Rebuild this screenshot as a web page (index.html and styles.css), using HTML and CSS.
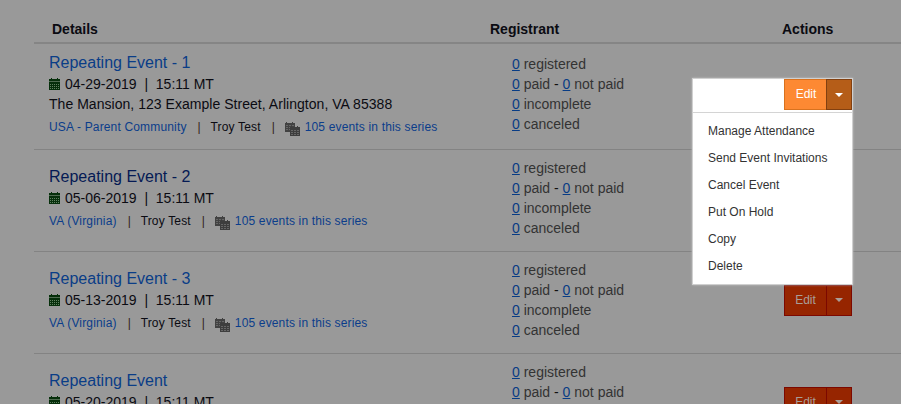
FILE: index.html
```
<!DOCTYPE html>
<html lang="en">
<head>
<meta charset="utf-8">
<title>Events</title>
<link rel="stylesheet" href="styles.css">
</head>
<body>
<svg class="defs" width="0" height="0" aria-hidden="true">
  <symbol id="cal" viewBox="0 0 11 12">
    <path d="M0 1h2V0h1v1h5V0h1v1h2v11H0z" fill="#062f0b"/>
    <path d="M0 3.5h11" stroke="#4f6b50"/>
    <path d="M1 6.5h9M1 8.5h9M1 10.5h9" stroke="#60805f" stroke-dasharray="1 1" fill="none"/>
  </symbol>
  <symbol id="series" viewBox="0 0 15 14">
    <path d="M0 1h1V0h1v1h5V0h1v1h2v9H0z" fill="#424242"/>
    <path d="M1 3.5h8M1 5.5h8M1 7.5h8" stroke="#666" stroke-dasharray="2 1"/>
    <path d="M5 5h1V4h1v1h5V4h1v1h2v9H5z" fill="#3d3d3d"/>
    <path d="M6 8.5h8M6 10.5h8M6 12.5h8" stroke="#666" stroke-dasharray="2 1"/>
  </symbol>
</svg>
<main class="table">
  <header class="head"><div>Details</div><div>Registrant</div><div>Actions</div></header>

  <section class="row first">
    <div class="details">
      <a class="title">Repeating Event - 1</a>
      <div class="date"><svg class="cal"><use href="#cal"/></svg>04-29-2019&nbsp; |&nbsp; 15:11 MT</div>
      <div class="address">The Mansion, 123 Example Street, Arlington, VA 85388</div>
      <div class="meta"><a>USA - Parent Community</a><i>|</i><span class="owner">Troy Test</span><i>|</i><svg class="series"><use href="#series"/></svg><a class="events">105 events in this series</a></div>
    </div>
    <div class="reg">
      <div><a>0</a> registered</div><div><a>0</a> paid <b>-</b> <a>0</a> not paid</div><div><a>0</a> incomplete</div><div><a>0</a> canceled</div>
    </div>
    <div class="actions">
      <div class="popup">
        <div class="bar"><div class="split active"><span class="edit">Edit</span><span class="toggle"></span></div></div>
        <ul class="menu"><li>Manage Attendance</li><li>Send Event Invitations</li><li>Cancel Event</li><li>Put On Hold</li><li>Copy</li><li>Delete</li></ul>
      </div>
    </div>
  </section>

  <section class="row">
    <div class="details">
      <a class="title visited">Repeating Event - 2</a>
      <div class="date"><svg class="cal"><use href="#cal"/></svg>05-06-2019&nbsp; |&nbsp; 15:11 MT</div>
      <div class="meta"><a>VA (Virginia)</a><i>|</i><span class="owner">Troy Test</span><i>|</i><svg class="series"><use href="#series"/></svg><a class="events">105 events in this series</a></div>
    </div>
    <div class="reg">
      <div><a>0</a> registered</div><div><a>0</a> paid <b>-</b> <a>0</a> not paid</div><div><a>0</a> incomplete</div><div><a>0</a> canceled</div>
    </div>
    <div class="actions"></div>
  </section>

  <section class="row">
    <div class="details">
      <a class="title">Repeating Event - 3</a>
      <div class="date"><svg class="cal"><use href="#cal"/></svg>05-13-2019&nbsp; |&nbsp; 15:11 MT</div>
      <div class="meta"><a>VA (Virginia)</a><i>|</i><span class="owner">Troy Test</span><i>|</i><svg class="series"><use href="#series"/></svg><a class="events">105 events in this series</a></div>
    </div>
    <div class="reg">
      <div><a>0</a> registered</div><div><a>0</a> paid <b>-</b> <a>0</a> not paid</div><div><a>0</a> incomplete</div><div><a>0</a> canceled</div>
    </div>
    <div class="actions"><div class="split"><span class="edit">Edit</span><span class="toggle"></span></div></div>
  </section>

  <section class="row">
    <div class="details">
      <a class="title">Repeating Event</a>
      <div class="date"><svg class="cal"><use href="#cal"/></svg>05-20-2019&nbsp; |&nbsp; 15:11 MT</div>
      <div class="meta"></div>
    </div>
    <div class="reg">
      <div><a>0</a> registered</div><div><a>0</a> paid <b>-</b> <a>0</a> not paid</div><div></div><div></div>
    </div>
    <div class="actions"><div class="split"><span class="edit">Edit</span><span class="toggle"></span></div></div>
  </section>
</main>
</body>
</html>
```
FILE: styles.css
```
* { box-sizing: border-box; }
html, body { margin: 0; height: 404px; overflow: hidden; }
body { background: #999; color: #0b0b12; font: 14px/20px "Liberation Sans", Arial, sans-serif; }
.defs { display: block; }
.table { margin-left: 34px; }
.head, .row { display: grid; grid-template-columns: 456px 292px 1fr; }
.head { height: 44px; padding-top: 19px; border-bottom: 2px solid #858585; font-weight: bold; }
.head div:first-child { padding-left: 18px; }
.row { height: 102px; padding-bottom: 5px; border-bottom: 1px solid #838383; align-items: center; white-space: nowrap; }
.first { height: 106px; }
.details { padding-left: 15px; }
.title { display: block; height: 24px; font-size: 16px; line-height: 26px; color: #0a3d87; }
.visited { color: #051a54; }
.date { display: flex; align-items: center; }
.address { letter-spacing: .035px; }
.cal { width: 11px; height: 12px; margin-right: 5px; }
.meta { display: flex; align-items: center; height: 24px; padding-top: 2px; font-size: 12px; line-height: 22px; letter-spacing: .16px; }
.meta a { color: #0b3d8b; }
.meta i { width: 3px; margin: 0 10px 0 11px; font-style: normal; color: #33211a; }
.series { width: 15px; height: 14px; margin: 4px 5px 0 0; }
.reg { padding-left: 22px; color: #333; }
.reg div { height: 20px; }
.reg a { color: #083c85; text-decoration: underline; }
.reg b { font-weight: normal; color: #111; }
.actions { position: relative; padding-left: 2px; }
.split { display: flex; width: 68px; height: 31px; background: #962500; border: 1px solid #7c0800; color: #a99e98; font-size: 12px; line-height: 29px; }
.edit { width: 42px; text-align: center; border-right: 1px solid #7c0800; }
.toggle { flex: 1; display: grid; place-items: center; }
.toggle::after { content: ""; border: 4px solid transparent; border-top-color: currentColor; border-bottom: 0; }
.active { background: #fd8933; border-color: #d8721f; color: #fff; }
.active .edit { border: 0; }
.active .toggle { margin: -1px; background: #b55d18; border: 1px solid #824010; }
.popup { position: absolute; z-index: 1; left: -90px; top: -16px; width: 161px; height: 207px; background: #fff; border: 1px solid #d0d0d0; box-shadow: 0 0 2px #c4c4c4; }
.bar { height: 34px; display: flex; justify-content: flex-end; border-bottom: 1px solid #d4d4d4; }
.menu { list-style: none; margin: 0; padding: 5px 0 0 15px; color: #333; font-size: 12px; line-height: 27px; }
```
